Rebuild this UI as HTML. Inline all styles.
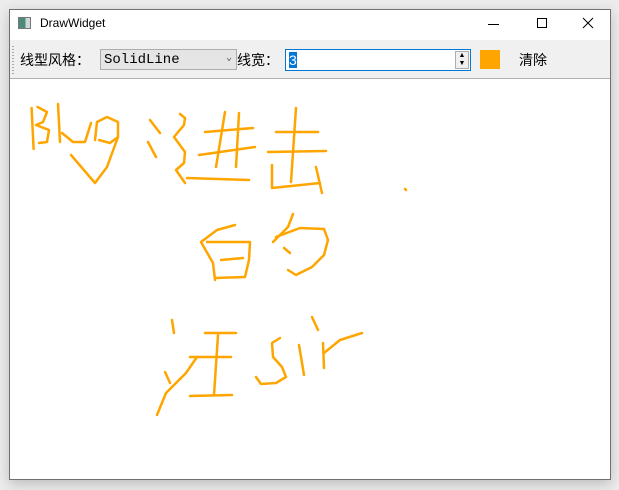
<!DOCTYPE html>
<html><head><meta charset="utf-8"><style>
*{margin:0;padding:0;box-sizing:border-box}
body{width:619px;height:490px;background:#ececec;position:relative;overflow:hidden;font-family:"Liberation Sans","Noto Sans CJK SC",sans-serif}
.win{position:absolute;left:9px;top:9px;width:602px;height:471px;border:1px solid #707070;background:#fff;box-shadow:0 4px 12px rgba(0,0,0,.2)}
.t{position:absolute;font-size:12px;color:#000}
.tb{position:absolute;left:0;top:30px;width:600px;height:39px;background:#f0f0f0;border-bottom:1px solid #b0b0b0}
.lbl{position:absolute;font-size:14px;top:10px;font-family:"Liberation Sans","Noto Sans CJK SC",sans-serif}
</style></head><body>
<div class="win">
  <div style="position:absolute;left:8px;top:7px;width:13px;height:12px;border:1px solid #777;background:linear-gradient(90deg,#4d8a7a 0 60%,#cfd8d8 60%)"></div>
  <div class="t" style="left:30px;top:6px">DrawWidget</div>
  <div style="position:absolute;left:478px;top:14px;width:11px;height:1px;background:#000"></div>
  <div style="position:absolute;left:527px;top:8px;width:10px;height:10px;border:1px solid #000"></div>
  <svg style="position:absolute;left:572px;top:7px" width="12" height="12"><path d="M1 1L11 11M11 1L1 11" stroke="#000" stroke-width="1"/></svg>
  <div class="tb">
    <div style="position:absolute;left:2px;top:6px;width:2px;height:28px;background:repeating-linear-gradient(#aaa 0 1px,transparent 1px 3px)"></div>
    <div class="lbl" style="left:10px">线型风格：</div>
    <div style="position:absolute;left:90px;top:9px;width:137px;height:21px;background:#e5e5e5;border:1px solid #adadad;font-family:'Liberation Mono',monospace;font-size:14px;padding-left:3px;line-height:20px">SolidLine<span style="position:absolute;right:4px;top:-1px;font-size:10px;color:#555">&#8964;</span></div>
    <div class="lbl" style="left:227px">线宽：</div>
    <div style="position:absolute;left:275px;top:9px;width:186px;height:22px;background:#fff;border:1px solid #0078d7">
      <span style="position:absolute;left:3px;top:2px;background:#0078d7;color:#fff;font-size:14px;line-height:16px;width:8px">3</span>
      <div style="position:absolute;right:1px;top:1px;width:14px;height:18px;border:1px solid #adadad;background:#f0f0f0;font-size:7px;line-height:8px;text-align:center">▲<br>▼</div>
    </div>
    <div style="position:absolute;left:470px;top:10px;width:20px;height:19px;background:#ffa500"></div>
    <div class="lbl" style="left:509px">清除</div>
  </div>
</div>
<svg style="position:absolute;left:0;top:0" width="619" height="490" fill="none" stroke="#ffa500" stroke-width="2.5" stroke-linecap="round" stroke-linejoin="round">
<polyline points="31.6,108 33.6,149"/>
<polyline points="37.5,107 47,112 43,122 36,125 49,130 47,142 39,143"/>
<polyline points="58,104 60,142"/>
<polyline points="62,133 73,142 85,142 91,123"/>
<polyline points="95,140 97,122 107,117 118,122 118,137 110,143 99,140"/>
<polyline points="118,137 107,167 95,183 71,155"/>
<polyline points="150,120 160,133"/><polyline points="148,142 156,157"/>
<polyline points="180,114 185,118 184,125 174,137 185,152 184,163 176,170 185,183"/>
<polyline points="187,178 249,180"/>
<polyline points="205,132 253,128"/><polyline points="199,155 255,147"/>
<polyline points="225,112 216,167"/><polyline points="239,113 236,167"/>
<polyline points="276,132 318,132"/><polyline points="268,152 326,151"/>
<polyline points="296,108 291,182"/>
<polyline points="272,165 272,188 320,183"/><polyline points="316,167 322,193"/>
<polyline points="405,189 406,190"/>
<polyline points="235,225 217,230 201,242 213,263 215,280"/>
<polyline points="207,242 250,242 249,260 245,277 215,278"/>
<polyline points="221,260 243,258"/>
<polyline points="293,214 288,227 273,242"/>
<polyline points="276,237 300,228 324,229 328,240 324,255 312,267 296,275 288,270"/>
<polyline points="284,248 290,253"/>
<polyline points="172,320 174,333"/><polyline points="165,372 170,383"/>
<polyline points="197,357 186,373 166,393 157,415"/>
<polyline points="205,333 236,333"/><polyline points="190,357 231,357"/>
<polyline points="218,335 214,395"/><polyline points="190,396 232,395"/>
<polyline points="280,338 272,343 273,357 282,367 286,377 276,383 261,384 256,377"/>
<polyline points="312,317 318,330"/><polyline points="299,345 304,375"/>
<polyline points="323,343 324,368"/><polyline points="324,353 340,340 362,333"/>
</svg>
</body></html>
